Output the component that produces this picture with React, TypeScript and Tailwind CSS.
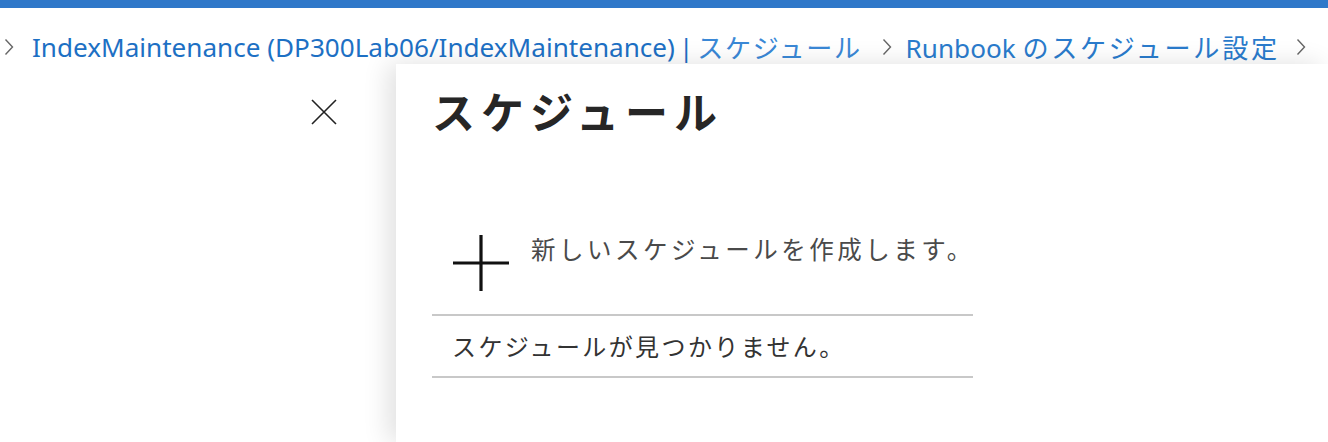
import React from "react";

const jp = { fontFamily: '"Noto Sans CJK JP", "Noto Sans", sans-serif' };
const latin = { fontFamily: '"Noto Sans", "Noto Sans CJK JP", sans-serif' };

function Chevron({ className = "" }: { className?: string }) {
  return (
    <svg width="10" height="18" viewBox="0 0 10 18" className={className}>
      <path d="M1.5 1.5 L8.5 9 L1.5 16.5" fill="none" stroke="#666" strokeWidth="1.4" />
    </svg>
  );
}

export default function App() {
  return (
    <div className="w-[1328px] h-[442px] overflow-hidden bg-white relative">
      <div className="h-[8px] bg-[#2f78c9]" />
      <div className="h-[56px] flex items-center pl-[4px] pt-[22px] text-[26.1px] leading-[34px] whitespace-nowrap">
        <Chevron />
        <span className="ml-[18px] text-[#1d70c4]" style={latin}>
          IndexMaintenance (DP300Lab06/IndexMaintenance)
        </span>
        <span className="ml-[4px] text-[#1d70c4]" style={latin}>|</span>
        <span className="ml-[4px] text-[#3a88d6] tracking-[1.6px]" style={jp}>スケジュール</span>
        <Chevron className="ml-[20px]" />
        <span className="ml-[14px] text-[#2a7bcc]" style={latin}>
          Runbook <span className="tracking-[2.7px]" style={jp}>のスケジュール設定</span>
        </span>
        <Chevron className="ml-[16px]" />
      </div>
      <div className="flex h-[378px]">
        <div className="w-[396px] shrink-0 relative">
          <svg width="26" height="26" viewBox="0 0 26 26" className="absolute left-[311px] top-[35px]">
            <path d="M1 1 L25 25 M25 1 L1 25" stroke="#222" strokeWidth="1.6" />
          </svg>
        </div>
        <div className="flex-1 bg-white shadow-[-8px_0_24px_rgba(0,0,0,0.12)] relative z-10 pl-[36px] pt-[18px]">
          <h1 className="text-[43px] font-bold text-[#262626] tracking-[6px] leading-[56px] whitespace-nowrap" style={jp}>
            スケジュール
          </h1>
          <div className="mt-[90px] w-[541px]">
            <div className="flex items-start h-[86px]">
              <svg width="56" height="56" viewBox="0 0 56 56" className="ml-[21px] mt-[7px] shrink-0">
                <path d="M28 0 V56 M0 28 H56" stroke="#111" strokeWidth="3.2" />
              </svg>
              <span className="ml-[22px] mt-[4px] text-[24.5px] text-[#4a4a4a] tracking-[3.5px] leading-[34px] whitespace-nowrap" style={jp}>
                新しいスケジュールを作成します。
              </span>
            </div>
            <div className="h-[2px] bg-[#c8c8c8]" />
            <div className="h-[60px] flex items-center pl-[20px] text-[24px] text-[#333] tracking-[2.4px] whitespace-nowrap" style={jp}>
              スケジュールが見つかりません。
            </div>
            <div className="h-[2px] bg-[#c8c8c8]" />
          </div>
        </div>
      </div>
    </div>
  );
}
